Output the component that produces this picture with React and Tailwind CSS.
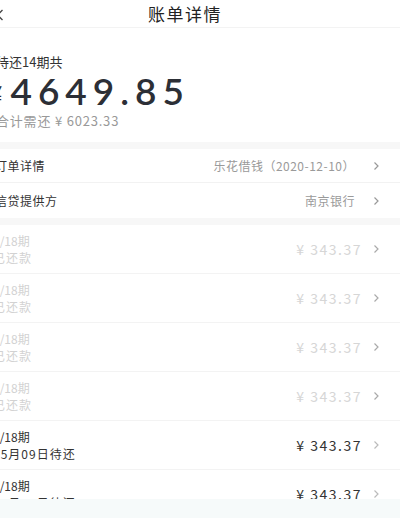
const FONT = { fontFamily: '"Noto Sans CJK SC", "Noto Sans", sans-serif' }

const rows = [
  { label: '1/18期', sub: '已还款', done: true },
  { label: '2/18期', sub: '已还款', done: true },
  { label: '3/18期', sub: '已还款', done: true },
  { label: '4/18期', sub: '已还款', done: true },
  { label: '5/18期', sub: '05月09日待还', done: false },
  { label: '6/18期', sub: '06月09日待还', done: false },
]

function Chevron({ className }) {
  return (
    <svg width="7" height="10" viewBox="0 0 7 10" className={className}>
      <path d="M1.5 1.5 L5 5 L1.5 8.5" fill="none" stroke="currentColor" strokeWidth="1.2" />
    </svg>
  )
}

export default function App() {
  return (
    <div className="w-[400px] h-[518px] overflow-hidden relative bg-white" style={FONT}>
      <div className="-ml-[20px] w-[420px]">
        <div className="h-[28px] relative flex items-center justify-center pr-[10px] border-b border-[#f3f3f3]">
          <svg width="8" height="12" viewBox="0 0 8 12" className="absolute left-[16px] top-[9px] text-[#444]">
            <path d="M6.5 1 L1.5 6 L6.5 11" fill="none" stroke="currentColor" strokeWidth="1.3" />
          </svg>
          <span className="text-[17px] tracking-[1.5px] text-[#222]">账单详情</span>
        </div>

        <div className="pl-[16px] pt-[26px] pb-[13px]">
          <div className="text-[13px] leading-[16px] text-[#333]">待还14期共</div>
          <div className="flex items-baseline -ml-[8px] mt-[1px] h-[40px] text-[#2c2f36]">
            <span className="text-[26px] leading-[40px] mr-[8px]">¥</span>
            <span className="text-[37px] leading-[40px] tracking-[6px] font-semibold" style={{ fontFamily: 'Lato, sans-serif' }}>
              4649.85
            </span>
          </div>
          <div className="mt-[2px] text-[13px] leading-[16px] text-[#999] tracking-[0.8px]">合计需还 ¥ 6023.33</div>
        </div>

        <div className="h-[7px] bg-[#f7f7f7]" />

        <div className="h-[34px] flex items-center justify-between pl-[15px] pr-[20px] border-b border-[#f2f2f2]">
          <span className="text-[12px] text-[#333] tracking-[0.5px]">订单详情</span>
          <span className="flex items-center gap-[18px] text-[12px] text-[#9a9a9a] tracking-[0.5px]">
            乐花借钱（2020-12-10）
            <Chevron className="text-[#999]" />
          </span>
        </div>
        <div className="h-[35px] flex items-center justify-between pl-[15px] pr-[20px]">
          <span className="text-[12px] text-[#333] tracking-[0.5px]">信贷提供方</span>
          <span className="flex items-center gap-[18px] text-[12px] text-[#9a9a9a] tracking-[0.5px]">
            南京银行
            <Chevron className="text-[#999]" />
          </span>
        </div>

        <div className="h-[7px] bg-[#f7f7f7]" />

        {rows.map((r, i) => (
          <div key={i} className="h-[49px] flex items-center justify-between pl-[13px] pr-[20px] border-b border-[#f3f3f3]">
            <div className="flex flex-col">
              <span className={`text-[12px] leading-[16px] ${r.done ? 'text-[#d2d2d2]' : 'text-[#333]'}`}>{r.label}</span>
              <span className={`text-[12px] leading-[17px] tracking-[1px] ${r.done ? 'text-[#d2d2d2]' : 'text-[#333]'}`}>{r.sub}</span>
            </div>
            <span className="flex items-center gap-[11px]">
              <span className={`text-[14px] tracking-[1.5px] ${r.done ? 'text-[#d6d6d6]' : 'text-[#333]'}`}>¥ 343.37</span>
              <Chevron className={r.done ? 'text-[#aaa]' : 'text-[#bbb]'} />
            </span>
          </div>
        ))}
      </div>
      <div className="absolute left-0 right-0 bottom-0 h-[19px] bg-[#f6fafa]" />
    </div>
  )
}
